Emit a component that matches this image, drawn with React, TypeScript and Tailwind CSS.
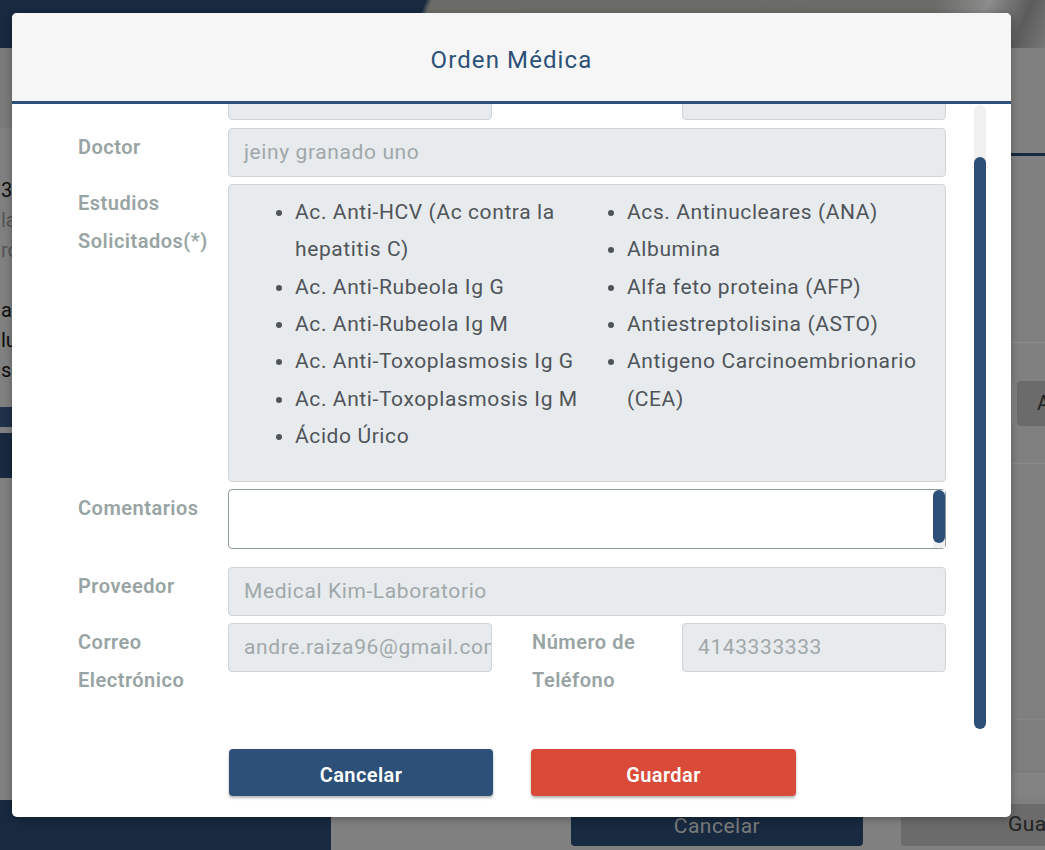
import React from "react";

const studiesLeft = [
  "Ac. Anti-HCV (Ac contra la hepatitis C)",
  "Ac. Anti-Rubeola Ig G",
  "Ac. Anti-Rubeola Ig M",
  "Ac. Anti-Toxoplasmosis Ig G",
  "Ac. Anti-Toxoplasmosis Ig M",
  "Ácido Úrico",
];

const studiesRight = [
  "Acs. Antinucleares (ANA)",
  "Albumina",
  "Alfa feto proteina (AFP)",
  "Antiestreptolisina (ASTO)",
  "Antigeno Carcinoembrionario (CEA)",
];

function Backdrop() {
  return (
    <div className="flex h-full flex-col">
      <div className="h-[48px] shrink-0 bg-[linear-gradient(112deg,#182a40_0%,#182a40_40%,#6c6c69_40.6%,#6b6b68_88%,#8c8c8c_93%,#5c5c5c_97%,#777777_100%)]" />
      <div className="flex flex-1">
        {/* left column of the page under the dialog */}
        <div className="flex w-[331px] shrink-0 flex-col">
          <div className="h-[80px] bg-[#7b7b7b]" />
          <div className="mt-[47px] flex flex-col pl-[1px] text-[20px] leading-[30px]">
            <span className="whitespace-nowrap text-[#0d0d0d]">3 de marzo</span>
            <span className="whitespace-nowrap text-[#555555]">laboratorio</span>
            <span className="whitespace-nowrap text-[#555555]">rc clínico</span>
            <span className="h-[30px]" />
            <span className="whitespace-nowrap text-[#0d0d0d]">a consulta</span>
            <span className="whitespace-nowrap text-[#0d0d0d]">lunes</span>
            <span className="whitespace-nowrap text-[#0d0d0d]">s</span>
          </div>
          <div className="mt-[22px] h-[20px] bg-[#1f3249]" />
          <div className="mt-[6px] h-[45px] bg-[#182a40]" />
          <div className="mt-auto h-[50px] bg-[#182a40]" />
        </div>
        {/* right column */}
        <div className="flex w-[800px] shrink-0 flex-col">
          <div className="h-[108px] border-b-[3px] border-[#182a40]" />
          <div className="h-[187px] border-b border-[#8c8c8c]" />
          <div className="flex h-[121px] items-center gap-[4px] border-b border-[#8a8a8a] pl-[676px]">
            <div className="h-[45px] w-[6px] shrink-0 rounded-r-[4px] border border-[#8e8e8e] bg-[#7d7d7d]" />
            <div className="flex h-[45px] w-[90px] shrink-0 items-center rounded-[4px] bg-[#6b6b6b] pl-[20px] text-[20px] text-[#222]">
              Aceptar
            </div>
          </div>
          <div className="h-[256px] border-b border-[#858585]" />
          <div className="h-[54px] border-b border-[#858585] bg-[#7e7e7e]" />
          <div className="h-[23px] bg-[#838383]" />
          <div className="flex flex-1 items-end gap-[38px] pb-[4px] pl-[240px]">
            <div className="flex h-[43px] w-[292px] shrink-0 items-center justify-center rounded-[4px] bg-[#182a40] pt-[4px] text-[21px] tracking-[0.5px] text-[#7a7a7a]">
              Cancelar
            </div>
            <div className="flex h-[42px] w-[292px] shrink-0 items-center justify-center rounded-[4px] bg-[#6b6b6b] text-[21px] tracking-[0.5px] text-[#222]">
              Guardar
            </div>
          </div>
        </div>
      </div>
    </div>
  );
}

function Label({ children, className = "" }: { children: React.ReactNode; className?: string }) {
  return (
    <div className={"w-[150px] shrink-0 text-[20px] font-semibold leading-[38px] tracking-[0.5px] text-[#98a4a4] " + className}>
      {children}
    </div>
  );
}

function Field({ value, className = "" }: { value: string; className?: string }) {
  return (
    <div
      className={
        "flex h-[49px] items-center overflow-hidden whitespace-nowrap rounded-[4px] border border-[#cfd4d9] bg-[#e8ebee] pl-[15px] text-[21px] tracking-[0.6px] text-[#9fa8a9] " +
        className
      }
    >
      {value}
    </div>
  );
}

function OrderForm() {
  return (
    <div className="-mt-[33px] flex flex-col">
      <div className="flex">
        <Label>Paciente</Label>
        <Field className="w-[264px]" value="Andrea Raiza" />
        <Label className="ml-[40px]">Fecha</Label>
        <Field className="w-[264px]" value="2023/05/12" />
      </div>

      <div className="mt-[8px] flex">
        <Label>Doctor</Label>
        <Field className="flex-1" value="jeiny granado uno" />
      </div>

      <div className="mt-[7px] flex">
        <Label>
          Estudios
          <br />
          Solicitados(*)
        </Label>
        <div className="grid h-[298px] flex-1 grid-cols-[332px_1fr] rounded-[4px] border border-[#cfd4d9] bg-[#e8ebee] pl-[24px] pr-[8px] pt-[9px] text-[21px] leading-[37.33px] tracking-[0.6px] text-[#4f5459]">
          <ul className="list-disc pl-[42px]">
            {studiesLeft.map((s) => (
              <li key={s}>{s}</li>
            ))}
          </ul>
          <ul className="list-disc pl-[42px]">
            {studiesRight.map((s) => (
              <li key={s}>{s}</li>
            ))}
          </ul>
        </div>
      </div>

      <div className="mt-[7px] flex">
        <Label>Comentarios</Label>
        <div className="flex h-[60px] flex-1 rounded-[4px] border border-[#8e9b9b] bg-white">
          <textarea className="flex-1 resize-none bg-transparent px-[15px] py-[8px] text-[20px] outline-none" />
          <div className="flex w-[12px] flex-col bg-[#f1f1f1]">
            <div className="h-[53px] rounded-full bg-[#2c5077]" />
          </div>
        </div>
      </div>

      <div className="mt-[18px] flex">
        <Label>Proveedor</Label>
        <Field className="flex-1" value="Medical Kim-Laboratorio" />
      </div>

      <div className="mt-[7px] flex">
        <Label>
          Correo
          <br />
          Electrónico
        </Label>
        <Field className="w-[264px]" value="andre.raiza96@gmail.com" />
        <Label className="ml-[40px]">
          Número de
          <br />
          Teléfono
        </Label>
        <Field className="w-[264px]" value="4143333333" />
      </div>
    </div>
  );
}

export default function App() {
  return (
    <div className="relative h-[850px] w-[1045px] overflow-hidden bg-[#808080] font-[family-name:Roboto,sans-serif]">
      <Backdrop />

      <div className="absolute left-[12px] top-[13px] flex h-[804px] w-[999px] flex-col overflow-hidden rounded-[5px] bg-white shadow-[0_2px_8px_rgba(0,0,0,0.3)]">
        <div className="flex h-[91px] shrink-0 items-center justify-center border-b-[3px] border-[#2c5077] bg-[#f6f6f6] pt-[5px]">
          <h2 className="text-[24px] tracking-[1.1px] text-[#2c5077]">Orden Médica</h2>
        </div>

        <div className="flex h-[634px] shrink-0">
          <div className="w-[934px] overflow-hidden pl-[66px]">
            <OrderForm />
          </div>
          <div className="ml-[28px] mt-[1px] flex h-[624px] w-[12px] flex-col rounded-full bg-[#f0f0f0]">
            <div className="mt-[52px] flex-1 rounded-full bg-[#2c5077]" />
          </div>
        </div>

        <div className="flex justify-center gap-[38px] pl-[2px] pt-[11px]">
          <button className="h-[47px] w-[264px] rounded-[4px] bg-[#2c5077] pt-[5px] text-[20px] font-semibold tracking-[0.4px] text-white shadow-[0_2px_3px_rgba(0,0,0,0.3)]">
            Cancelar
          </button>
          <button className="h-[47px] w-[265px] rounded-[4px] bg-[#d94a38] pt-[5px] text-[20px] font-semibold tracking-[0.4px] text-white shadow-[0_2px_3px_rgba(0,0,0,0.3)]">
            Guardar
          </button>
        </div>
      </div>
    </div>
  );
}
